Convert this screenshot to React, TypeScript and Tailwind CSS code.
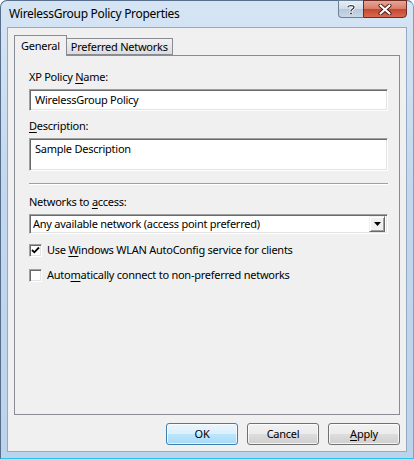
import React from "react";

const font = { fontFamily: '"Noto Sans", "Open Sans", sans-serif' };

function U({ children }: { children: React.ReactNode }) {
  return <span className="underline underline-offset-[2px] decoration-[1px]">{children}</span>;
}

function Sunken({ className, children }: { className: string; children?: React.ReactNode }) {
  return (
    <div
      className={
        "bg-white border border-t-[#a0a0a0] border-l-[#a0a0a0] border-b-white border-r-white shadow-[inset_1px_1px_0_#696969,inset_-1px_-1px_0_#e3e3e3] " +
        className
      }
    >
      {children}
    </div>
  );
}

function Check({ checked }: { checked: boolean }) {
  return (
    <div className="w-[13px] h-[13px] bg-white border border-t-[#a0a0a0] border-l-[#a0a0a0] border-b-white border-r-white shadow-[inset_1px_1px_0_#696969,inset_-1px_-1px_0_#e3e3e3] flex items-center justify-center shrink-0">
      {checked && (
        <svg width="9" height="9" viewBox="0 0 9 9">
          <path d="M1 4 L3.3 6.3 L8 1.5" stroke="#000" strokeWidth="1.8" fill="none" />
        </svg>
      )}
    </div>
  );
}

function Btn({ children, def }: { children: React.ReactNode; def?: boolean }) {
  return (
    <div
      className={
        "w-[72px] h-[22px] rounded-[3px] border flex items-center justify-center text-black " +
        (def
          ? "border-[#3c7fb1] bg-[linear-gradient(#eaf6fd_0%,#d9f0fc_50%,#bee6fd_50%,#a7d9f5_100%)] shadow-[inset_0_0_0_1px_#ffffffb0]"
          : "border-[#707070] bg-[linear-gradient(#f2f2f2_0%,#ebebeb_50%,#dddddd_50%,#cfcfcf_100%)] shadow-[inset_0_0_0_1px_#ffffffc0]")
      }
    >
      {children}
    </div>
  );
}

export default function App() {
  return (
    <div className="w-[414px] h-[459px] bg-white overflow-hidden text-black text-[11px] leading-[16px] tracking-[-0.25px]" style={font}>
      <div className="w-[414px] h-[459px] rounded-t-[7px] border border-[#566e8c] border-r-[#25c4f3] border-b-[#25c4f3] bg-[linear-gradient(180deg,#d6e5f4_0%,#c3d8ee_40%,#bcd3ec_100%)] flex flex-col">
        <div className="h-[26px] flex items-start relative shrink-0">
          <div className="pl-[8px] pt-[5px] text-[12px] leading-[16px] tracking-[-0.3px] text-black">WirelessGroup Policy Properties</div>
          <div className="absolute top-[-1px] right-[6px] flex">
            <div className="w-[25px] h-[18px] rounded-bl-[4px] border border-[#6d7f94] border-r-0 bg-[linear-gradient(#e7eef6_0%,#cfdbe8_50%,#b7c7d9_50%,#c9d8e8_100%)] flex items-center justify-center">
              <svg width="10" height="11" viewBox="0 0 10 11">
                <path d="M2 3.2 C2 1 8 1 8 3.3 C8 5 5 5 5 7.2" stroke="#fff" strokeWidth="3" fill="none" />
                <path d="M2 3.2 C2 1 8 1 8 3.3 C8 5 5 5 5 7.2" stroke="#2d3b4d" strokeWidth="1.3" fill="none" />
                <rect x="3.8" y="8.3" width="2.4" height="2.4" fill="#2d3b4d" stroke="#fff" strokeWidth="0.6" />
              </svg>
            </div>
            <div className="w-[44px] h-[18px] rounded-br-[4px] border border-[#6d2b24] bg-[linear-gradient(#e8a596_0%,#d67c68_50%,#c5452f_50%,#d76a4f_100%)] flex items-center justify-center">
              <svg width="14" height="11" viewBox="0 0 14 11">
                <path d="M2.5 1.5 L11.5 9.5 M11.5 1.5 L2.5 9.5" stroke="#4a1a14" strokeWidth="4" strokeLinecap="round" />
                <path d="M2.5 1.5 L11.5 9.5 M11.5 1.5 L2.5 9.5" stroke="#ffffff" strokeWidth="2.2" strokeLinecap="round" />
              </svg>
            </div>
          </div>
        </div>
        <div className="mx-[6px] mb-[6px] flex-1 bg-[#f0f0f0] border border-[#94a9c2] flex flex-col px-[6px] pt-[7px]">
          <div className="flex items-end h-[20px] relative z-10">
            <div className="h-[21px] px-[6px] border border-[#898c95] border-b-0 bg-[#f0f0f0] pt-[2px] mb-[-1px]">
              General
            </div>
            <div className="h-[17px] px-[4px] border border-[#898c95] border-l-0 bg-[linear-gradient(#f2f2f2,#dcdcdc)] leading-[15px]">
              Preferred Networks
            </div>
          </div>
          <div className="h-[360px] border border-[#898c95] bg-[#f0f0f0] flex flex-col pl-[14px] pr-[11px] pt-[13px]">
            <div>
              XP Policy <U>N</U>ame:
            </div>
            <Sunken className="mt-[4px] h-[22px] flex items-center pl-[5px]">WirelessGroup Policy</Sunken>
            <div className="mt-[7px]">
              <U>D</U>escription:
            </div>
            <Sunken className="mt-[4px] h-[33px] pl-[5px] pt-[2px]">Sample Description</Sunken>
            <div className="mt-[12px] h-[2px] border-t border-t-[#a0a0a0] border-b border-b-white" />
            <div className="mt-[9px]">
              Networks to <U>a</U>ccess:
            </div>
            <Sunken className="mt-[4px] h-[20px] flex items-center pl-[3px] pr-[2px]">
              <span className="flex-1">Any available network (access point preferred)</span>
              <div className="w-[16px] h-[16px] bg-[#f0f0f0] border border-t-[#f0f0f0] border-l-[#f0f0f0] border-b-[#696969] border-r-[#696969] shadow-[inset_1px_1px_0_#fff,inset_-1px_-1px_0_#a0a0a0] flex items-center justify-center">
                <svg width="7" height="4" viewBox="0 0 7 4">
                  <path d="M0 0 H7 L3.5 4 Z" fill="#000" />
                </svg>
              </div>
            </Sunken>
            <div className="mt-[8px] flex items-center gap-[5px]">
              <Check checked />
              <span>
                Use <U>W</U>indows WLAN AutoConfig service for clients
              </span>
            </div>
            <div className="mt-[9px] flex items-center gap-[5px]">
              <Check checked={false} />
              <span>
                Auto<U>m</U>atically connect to non-preferred networks
              </span>
            </div>
          </div>
          <div className="flex justify-end gap-[9px] mt-[8px]">
            <Btn def>OK</Btn>
            <Btn>Cancel</Btn>
            <Btn>
              <U>A</U>pply
            </Btn>
          </div>
        </div>
      </div>
    </div>
  );
}
